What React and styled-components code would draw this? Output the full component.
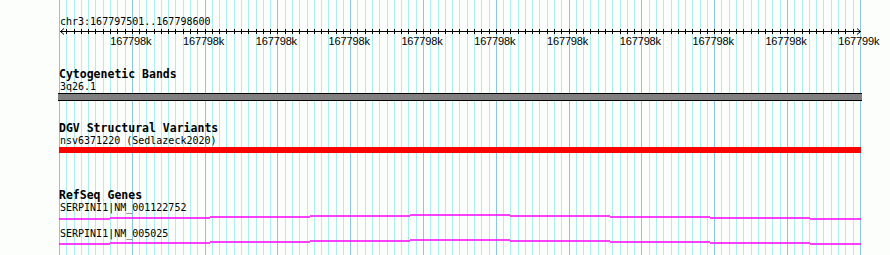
import React from "react";
import styled, { createGlobalStyle } from "styled-components";

const GlobalStyle = createGlobalStyle`
  html, body {
    margin: 0;
    padding: 0;
    background: #fbfefb;
  }
`;

const LEFT = 59;
const STEP = 7.28;
const COUNT = 110;
const TRACK_WIDTH = 803;

const Browser = styled.div`
  position: relative;
  width: 890px;
  height: 255px;
  overflow: hidden;
`;

const GridLayer = styled.svg`
  position: absolute;
  left: 0;
  top: 0;
  z-index: 0;
`;

const Tracks = styled.div`
  position: relative;
  z-index: 1;
  display: flex;
  flex-direction: column;
  padding-left: ${LEFT}px;
  width: ${TRACK_WIDTH}px;
`;

const Location = styled.div`
  margin-top: 15.5px;
  padding-left: 1px;
  font-family: "DejaVu Sans Mono", "Liberation Mono", monospace;
  font-size: 10px;
  line-height: 12px;
  height: 12px;
  color: #000;
  white-space: nowrap;
`;

const Axis = styled.svg`
  display: block;
`;

const TickLabels = styled.div`
  display: flex;
  height: 12px;
  margin-left: ${STEP * 5 - 1}px;
`;

const TickLabel = styled.span`
  flex: 0 0 ${STEP * 10}px;
  text-align: center;
  font-family: "Liberation Sans", Arial, sans-serif;
  font-size: 11px;
  line-height: 12px;
  letter-spacing: -0.15px;
  color: #000;
  white-space: nowrap;
`;

const Track = styled.section`
  display: flex;
  flex-direction: column;
  margin-top: ${(p) => p.$gap}px;
`;

const TrackTitle = styled.div`
  font-family: "DejaVu Sans Mono", "Liberation Mono", monospace;
  font-weight: bold;
  font-size: 11.5px;
  line-height: 13px;
  height: 13px;
  color: #000;
  white-space: nowrap;
`;

const FeatureLabel = styled.div`
  padding-left: 1px;
  font-family: "DejaVu Sans Mono", "Liberation Mono", monospace;
  font-size: 10px;
  line-height: 12px;
  height: 12px;
  color: #000;
  white-space: nowrap;
`;

const BandBar = styled.div`
  margin: 0.5px 0 0 -1px;
  width: ${TRACK_WIDTH + 1}px;
  height: 6px;
  background: #808080;
  border-top: 1px solid #000;
  border-bottom: 1px solid #000;
`;

const VariantBar = styled.div`
  margin-top: 0.5px;
  width: ${TRACK_WIDTH - 1}px;
  height: 6px;
  background: #ff0000;
`;

const GeneLine = styled.svg`
  display: block;
  margin-top: ${(p) => p.$shift || 0}px;
`;

const ticks = Array.from({ length: COUNT + 1 }, (_, i) => i);
const labels = [
  "167798k", "167798k", "167798k", "167798k", "167798k", "167798k",
  "167798k", "167798k", "167798k", "167798k", "167799k",
];

const segments = [
  [0, 51, 4],
  [51, 151, 3],
  [151, 251, 2],
  [251, 351, 1],
  [351, 451, 0],
  [451, 551, 1],
  [551, 651, 2],
  [651, 751, 3],
  [751, 802, 4],
];

function Grid() {
  return (
    <GridLayer width="890" height="255" shapeRendering="crispEdges">
      {ticks.map((i) => {
        const x = Math.round(LEFT + i * STEP) + 0.5;
        const major = i % 10 === 0;
        return (
          <line
            key={i}
            x1={x}
            x2={x}
            y1="0"
            y2="255"
            stroke={major ? "#8cc6e6" : "#aeeeee"}
            strokeWidth="1"
          />
        );
      })}
    </GridLayer>
  );
}

function Ruler() {
  return (
    <>
      <Location>chr3:167797501..167798600</Location>
      <Axis width={TRACK_WIDTH} height="7" shapeRendering="crispEdges">
        <line x1="1" x2="802" y1="3.5" y2="3.5" stroke="#000" />
        {ticks.slice(1, COUNT).map((i) => {
          const x = Math.round(i * STEP) + 0.5;
          return <line key={i} x1={x} x2={x} y1="1" y2="6" stroke="#000" />;
        })}
        <polyline points="5,0.5 1.5,3.5 5,6.5" fill="none" stroke="#000" shapeRendering="auto" />
        <polyline points="798,0.5 801.5,3.5 798,6.5" fill="none" stroke="#000" shapeRendering="auto" />
      </Axis>
      <TickLabels>
        {labels.map((t, i) => (
          <TickLabel key={i}>{t}</TickLabel>
        ))}
      </TickLabels>
    </>
  );
}

function Gene({ name, shift }) {
  return (
    <>
      <FeatureLabel>{name}</FeatureLabel>
      <GeneLine width={TRACK_WIDTH} height="14" $shift={shift}>
        {segments.map(([a, b, y], i) => (
          <line
            key={i}
            x1={a}
            x2={b}
            y1={y + 1}
            y2={y + 1}
            stroke="#ff00ff"
            strokeWidth="1.5"
          />
        ))}
      </GeneLine>
    </>
  );
}

export default function App() {
  return (
    <Browser>
      <GlobalStyle />
      <Grid />
      <Tracks>
        <Ruler />
        <Track $gap={21}>
          <TrackTitle>Cytogenetic Bands</TrackTitle>
          <FeatureLabel>3q26.1</FeatureLabel>
          <BandBar />
        </Track>
        <Track $gap={20.5}>
          <TrackTitle>DGV Structural Variants</TrackTitle>
          <FeatureLabel>nsv6371220 (Sedlazeck2020)</FeatureLabel>
          <VariantBar />
        </Track>
        <Track $gap={35.5}>
          <TrackTitle>RefSeq Genes</TrackTitle>
          <Gene name="SERPINI1|NM_001122752" />
          <Gene name="SERPINI1|NM_005025" shift={-1} />
        </Track>
      </Tracks>
    </Browser>
  );
}
